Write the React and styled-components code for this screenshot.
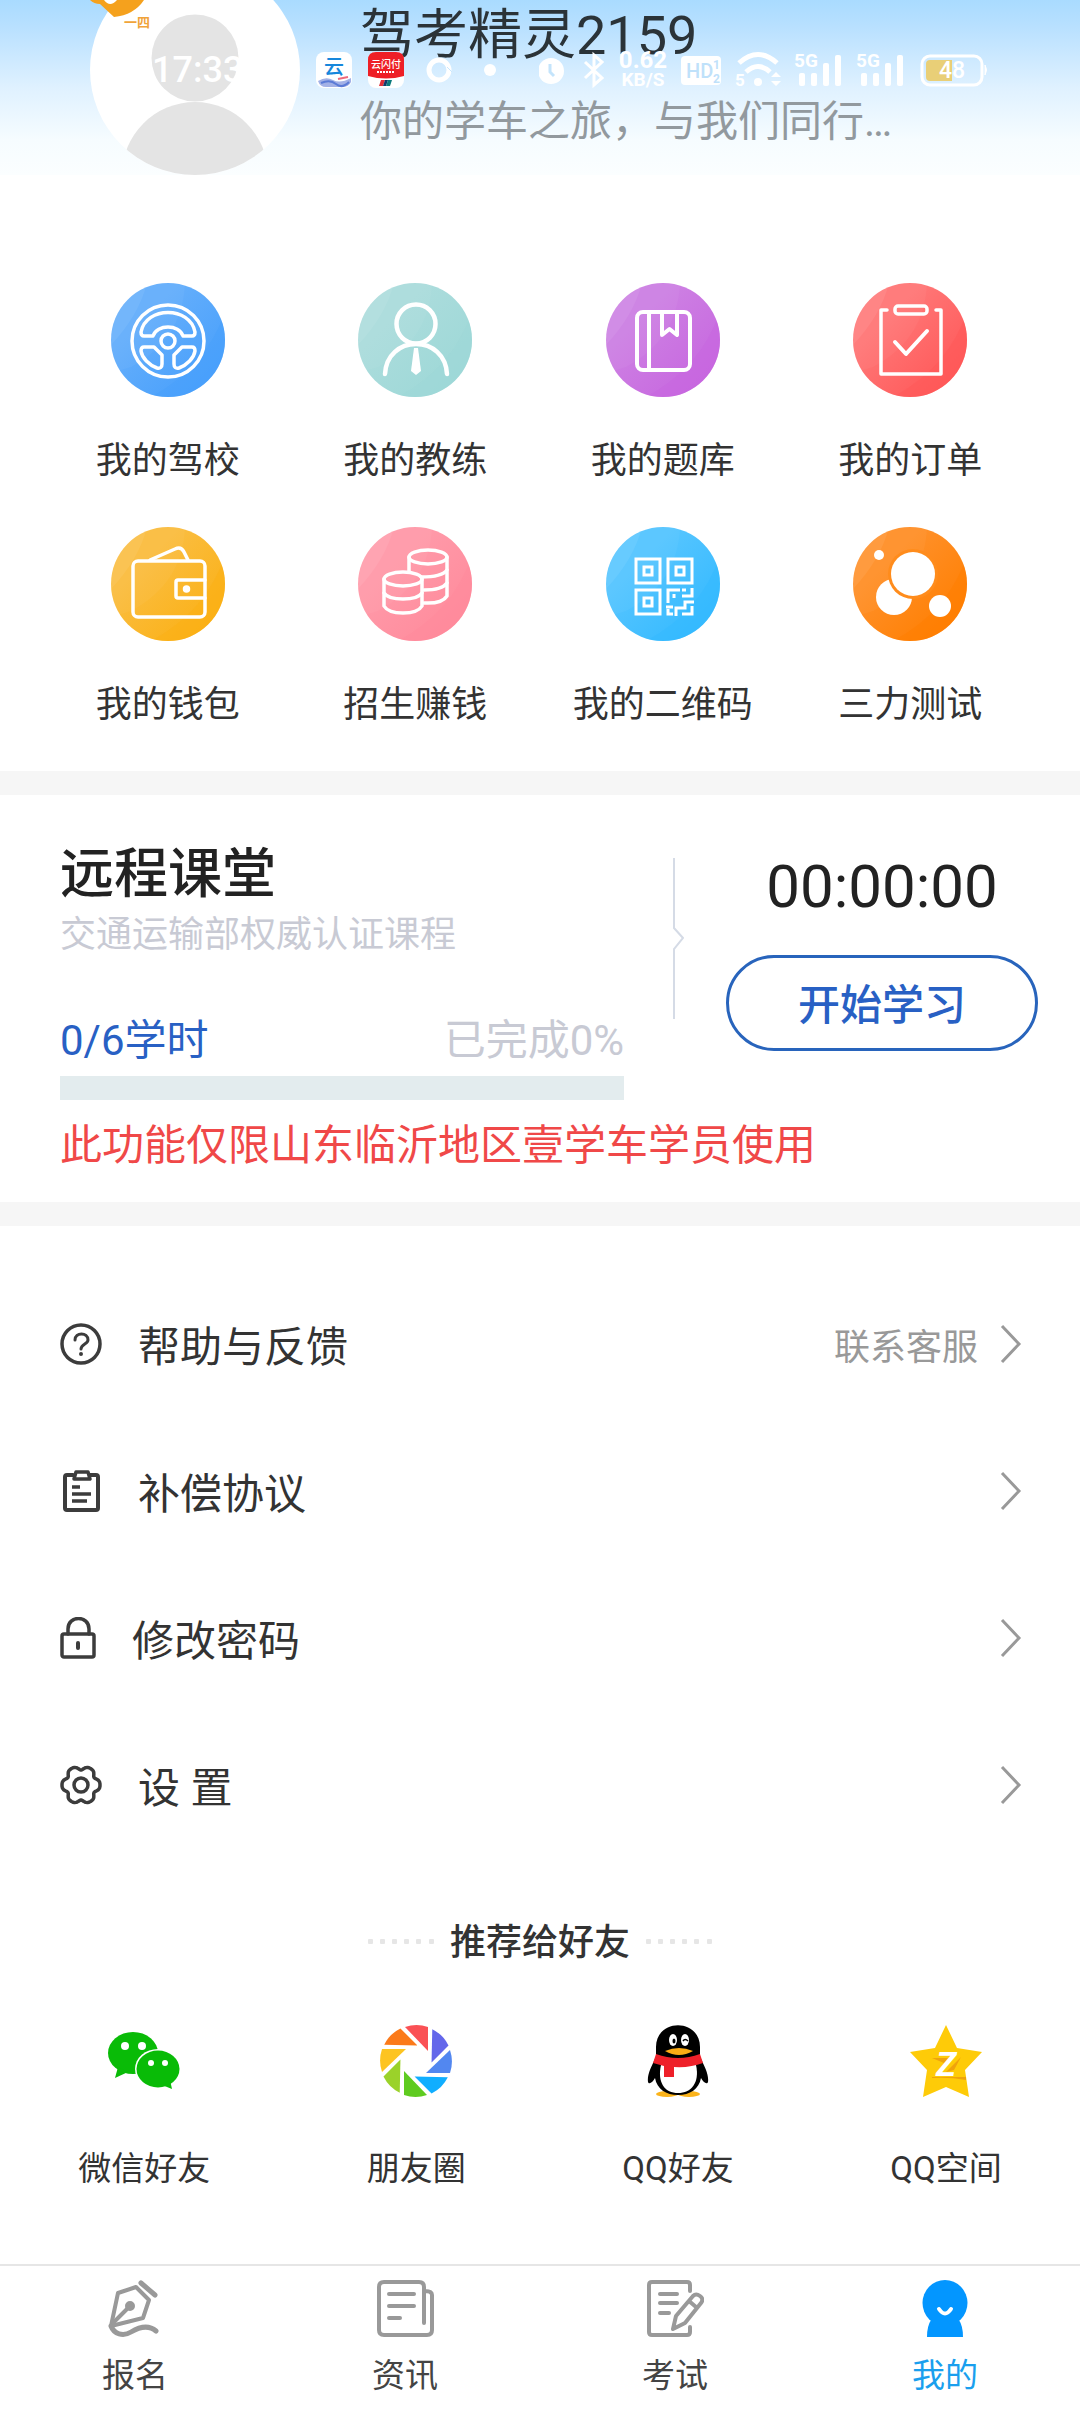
import React from "react";
import styled, { createGlobalStyle } from "styled-components";

const GlobalStyle = createGlobalStyle`
  * {
    box-sizing: border-box;
  }

  body {
    margin: 0;
    background: #fff;
    color: #333;
    font-family: Roboto, "Noto Sans CJK SC", sans-serif;
    font-size: 36px;
  }

  a {
    color: inherit;
    text-decoration: none;
  }

  svg {
    display: block;
    flex: none;
  }

  h1, h2, p {
    margin: 0;
    font-weight: 400;
  }
`;

const Page = styled.div`
  position: relative;
  display: flex;
  flex-direction: column;
  min-height: 100vh;
  overflow: hidden;
`;

const StatusBar = styled.div`
  position: absolute;
  top: 48px;
  left: 0;
  right: 0;
  display: flex;
  align-items: center;
  height: 44px;
  padding: 0 92px 0 152px;
  color: #fff;
`;

const Clock = styled.time`
  width: 164px;
  font-size: 36px;
  font-weight: 500;
  line-height: 44px;
`;

const StatusGroup = styled.div`
  display: flex;
  align-items: center;
  gap: ${props => props.gap}px;
  margin-left: ${props => (props.end ? "auto" : "0")};
`;

const NetSpeed = styled.div`
  width: 52px;
  font-size: ${props => props.size}px;
  font-weight: 700;
  line-height: 20px;
  text-align: center;
`;

const Header = styled.header`
  display: flex;
  gap: 60px;
  height: 175px;
  padding-left: 90px;
  background: linear-gradient(#a9dbff, #b8e0ff 15%, #dff1ff 50%, #f6fcff 80%, #fbfeff);
`;

const Nickname = styled.h1`
  font-size: 54px;
  line-height: 72px;
  color: #2b3338;
`;

const Slogan = styled.p`
  margin-top: 22px;
  font-size: 42px;
  line-height: 56px;
  color: #92999e;
`;

const FeatureGrid = styled.nav`
  display: grid;
  grid-template-columns: repeat(4, 1fr);
  row-gap: 42px;
  padding: 108px 46px 42px 44px;
`;

const IconLink = styled.a`
  display: flex;
  flex-direction: column;
  align-items: center;
  gap: ${props => props.gap}px;
  font-size: ${props => props.size}px;
  line-height: ${props => props.line}px;
  color: ${props => props.color || "#333"};
  white-space: nowrap;
`;

const Band = styled.div`
  height: 24px;
  background: #f6f6f6;
`;

const Classroom = styled.section`
  padding: 48px 42px 28px 60px;
`;

const ClassroomRow = styled.div`
  display: flex;
  gap: 42px;
`;

const Course = styled.div`
  flex: 1;
`;

const CourseTitle = styled.h2`
  font-size: 54px;
  font-weight: 500;
  line-height: 64px;
  color: #222;
`;

const CourseNote = styled.p`
  margin-top: 4px;
  font-size: 36px;
  line-height: 48px;
  color: #c8cad4;
`;

const Hours = styled.div`
  display: flex;
  justify-content: space-between;
  margin: 54px 0 7px;
  font-size: 42px;
  line-height: 56px;
  color: #c8cad4;
`;

const HoursDone = styled.span`
  color: #2860c4;
`;

const Track = styled.div`
  height: 24px;
  background: #e3ecee;
`;

const Fill = styled.div`
  height: 100%;
  background: #2860c4;
`;

const Study = styled.div`
  display: flex;
  flex-direction: column;
  gap: 32px;
  width: 312px;
  padding-top: 8px;
  text-align: center;
`;

const Timer = styled.time`
  font-size: 60px;
  line-height: 72px;
  color: #222;
`;

const StartButton = styled.button`
  height: 96px;
  padding: 0 0 4px;
  border: 3px solid #2864bc;
  border-radius: 48px;
  background: #fff;
  color: #2860c4;
  font: inherit;
  font-size: 42px;
  font-weight: 500;
`;

const Divider = styled.svg`
  margin-top: 15px;
`;

const Warning = styled.p`
  margin-top: 18px;
  font-size: 42px;
  line-height: 56px;
  color: #f04848;
`;

const Menu = styled.nav`
  padding: 44px 58px 0 60px;
`;

const MenuItem = styled.a`
  display: flex;
  align-items: center;
  height: 147px;
  font-size: 42px;
`;

const MenuLabel = styled.span`
  flex: 1;
  margin-left: 36px;
`;

const MenuHint = styled.span`
  margin-right: 22px;
  font-size: 36px;
  color: #999;
`;

const ShareTitle = styled.h2`
  display: flex;
  justify-content: center;
  align-items: center;
  gap: 16px;
  margin-top: 61px;
  font-size: 36px;
  font-weight: 500;
  line-height: 48px;
`;

const ShareRow = styled.div`
  display: flex;
  justify-content: space-around;
  padding: 58px 0 73px;
`;

const TabBar = styled.nav`
  display: grid;
  grid-template-columns: repeat(4, 1fr);
  margin-top: auto;
  padding: 14px 0;
  border-top: 2px solid #e6e6e6;
`;

const CellSignal = () => (
  <svg width="50" height="40" viewBox="0 0 50 40" fill="#fff">
    <text x="1" y="17" fontSize="19" fontWeight="700">5G</text>
    <rect x="6" y="23" width="6" height="13" rx="2" />
    <rect x="18" y="23" width="6" height="13" rx="2" />
    <rect x="30" y="13" width="6" height="23" rx="2" />
    <rect x="42" y="5" width="6" height="31" rx="2" />
  </svg>
);

const Status = () => (
  <StatusBar>
    <Clock>17:33</Clock>
    <StatusGroup gap={16}>
      <svg width="36" height="36" viewBox="0 0 36 36">
        <rect width="36" height="36" rx="8" fill="#fff" />
        <text x="18" y="22" fontSize="20" fontWeight="500" textAnchor="middle" fill="#1687dc">云</text>
        <path d="M2 29 Q10 24 17 28 T35 26 V30 Q33 35 26 35 H10 Q4 35 2 29Z" fill="#a3b1e6" />
        <path d="M5 31 Q14 27 20 32 T33 30" fill="none" stroke="#5b7bd6" strokeWidth="2" />
        <path d="M22 27 L32 25" stroke="#ef6a7c" strokeWidth="2" />
      </svg>
      <svg width="36" height="36" viewBox="0 0 36 36">
        <rect width="36" height="36" rx="8" fill="#fff" />
        <path d="M0 8 Q0 0 8 0 H28 Q36 0 36 8 V24 Q18 29 0 24Z" fill="#ee1f26" />
        <text x="18" y="16" fontSize="10" fontWeight="500" textAnchor="middle" fill="#fff">云闪付</text>
        <path d="M9 20 H27" stroke="#fff" strokeWidth="2" strokeDasharray="2 1" />
        <path d="M13 28 H17 L15 34 H11Z" fill="#e0303a" />
        <path d="M17 28 H20 L18 34 H15Z" fill="#123a6b" />
        <path d="M20 28 H24 L22 34 H18Z" fill="#0b7a7c" />
      </svg>
      <svg width="36" height="36" viewBox="0 0 36 36">
        <circle cx="19" cy="18" r="10" fill="none" stroke="#fff" strokeWidth="5" />
        <path d="M27 15 L32 20" stroke="#c9e7fd" strokeWidth="1" />
      </svg>
      <svg width="36" height="36" viewBox="0 0 36 36">
        <circle cx="18" cy="18" r="6" fill="#fff" />
      </svg>
    </StatusGroup>
    <StatusGroup gap={12} end>
      <svg width="32" height="40" viewBox="0 0 32 40">
        <circle cx="12" cy="21" r="13" fill="#fff" />
        <path d="M11 14 V22 L15 26" fill="none" stroke="#c4e4fb" strokeWidth="3" />
      </svg>
      <svg width="22" height="40" viewBox="0 0 22 40" fill="none" stroke="#fff" strokeWidth="3">
        <path d="M2 12 L19 28 L11 35 V5 L19 12 L2 28" />
      </svg>
      <div>
        <NetSpeed size={24}>0.62</NetSpeed>
        <NetSpeed size={19}>KB/S</NetSpeed>
      </div>
      <svg width="42" height="40" viewBox="0 0 42 40">
        <rect y="6" width="40" height="29" rx="4" fill="#fff" />
        <text x="5" y="28" fontSize="20" fontWeight="500" fill="#bfe1fa">HD</text>
        <text x="32" y="19" fontSize="12" fontWeight="700" fill="#bfe1fa">1</text>
        <text x="32" y="33" fontSize="12" fontWeight="700" fill="#bfe1fa">2</text>
      </svg>
      <svg width="46" height="40" viewBox="0 0 46 40">
        <g fill="none" stroke="#fff" strokeWidth="5">
          <path d="M4 13 Q23 -4 42 13" />
          <path d="M11 22 Q23 11 35 22" />
        </g>
        <circle cx="23" cy="32" r="4" fill="#fff" />
        <text y="36" fontSize="17" fontWeight="700" fill="#fff">5</text>
        <path d="M36 27 L41 22 L46 27Z M36 31 L41 36 L46 31Z" fill="#fff" />
      </svg>
      <CellSignal />
      <CellSignal />
      <svg width="71" height="40" viewBox="0 0 71 40">
        <rect x="5" y="6" width="60" height="29" rx="8" fill="none" stroke="#fff" strokeWidth="3" />
        <path d="M9 14 Q9 10 13 10 H35 V31 H13 Q9 31 9 27Z" fill="#e9cf77" />
        <path d="M68 15 Q71 20 68 25Z" fill="#fff" stroke="#fff" />
        <text x="35" y="28" fontSize="23" fontWeight="500" textAnchor="middle" fill="#fff">48</text>
      </svg>
    </StatusGroup>
  </StatusBar>
);

const Avatar = () => (
  <svg width="210" height="175" viewBox="0 0 210 175">
    <defs>
      <clipPath id="avatar">
        <circle cx="105" cy="70" r="105" />
      </clipPath>
    </defs>
    <circle cx="105" cy="70" r="105" fill="#fff" />
    <g clipPath="url(#avatar)" fill="#e4e4e4">
      <circle cx="105" cy="58" r="43.500" />
      <circle cx="105" cy="175" r="73" />
    </g>
    <path d="M0 0 H54 Q44 15 24 17 L10 4 Q4 4 0 0Z" fill="#f5a11d" />
    <path d="M14 0 Q20 8 27 0Z" fill="#fff" />
    <text x="34" y="27" fontSize="13" fontWeight="700" fill="#f0a33a">一四</text>
  </svg>
);

const Disc = ({ from, to, children }) => {
  const id = `disc-${to.slice(1)}`;
  return (
    <svg width="114" height="114" viewBox="0 0 114 114">
      <defs>
        <linearGradient id={id} x1="0" y1="0" x2="1" y2="1">
          <stop offset="0.3" stopColor={from} />
          <stop offset="0.9" stopColor={to} />
        </linearGradient>
        <clipPath id={`${id}-clip`}>
          <circle cx="57" cy="57" r="57" />
        </clipPath>
      </defs>
      <g clipPath={`url(#${id}-clip)`}>
        <rect width="114" height="114" fill={`url(#${id})`} />
        <path d="M0 0 H36 Q28 32 0 62Z" fill="#fff" opacity="0.07" />
        <path d="M0 0 H74 Q72 56 20 84 L0 90Z" fill="#fff" opacity="0.04" />
        <path d="M114 28 Q96 84 40 114 H114Z" fill={to} opacity="0.5" />
      </g>
      <g fill="none" stroke="#fff" strokeWidth="4" strokeLinecap="round" strokeLinejoin="round">
        {children}
      </g>
    </svg>
  );
};

const features = [
  {
    label: "我的驾校",
    from: "#64aefb",
    to: "#479ffc",
    art: (
      <g strokeWidth="3.500">
        <circle cx="57" cy="58" r="36" />
        <circle cx="57" cy="58" r="7" />
        <path d="M33 53 H42 C46 41 68 41 72 53 H81 Q84 53 84 49 C79 23 35 23 30 49 Q30 53 33 53Z" />
        <path d="M33 64 H43 L51 72 V81 Q51 86 46 85 C38 82 31 75 30 68 Q30 64 33 64Z" />
        <path d="M81 64 H71 L63 72 V81 Q63 86 68 85 C76 82 83 75 84 68 Q84 64 81 64Z" />
      </g>
    )
  },
  {
    label: "我的教练",
    from: "#abdcdc",
    to: "#9dd8d7",
    art: (
      <g strokeWidth="4.500">
        <circle cx="58" cy="41" r="19.500" />
        <path d="M27 91 C28 72 42 61 58 61 S88 72 89 91" />
        <path d="M56 65 H60 L63 88 L58 92 L53 88Z" fill="#fff" stroke="none" />
      </g>
    )
  },
  {
    label: "我的题库",
    from: "#cd80e3",
    to: "#c766df",
    art: (
      <g>
        <rect x="31" y="29" width="53" height="58" rx="6" />
        <path d="M43 30 V86" />
        <path d="M56 30 V52 L63.500 46 L71 52 V30" />
      </g>
    )
  },
  {
    label: "我的订单",
    from: "#ff7777",
    to: "#ff5757",
    art: (
      <g>
        <path d="M34 27 H28 V91 H88 V27 H83" strokeWidth="3.500" />
        <rect x="42" y="23" width="32" height="8" rx="3" strokeWidth="3.500" />
        <path d="M42 59 L53 71 L74 48" />
      </g>
    )
  },
  {
    label: "我的钱包",
    from: "#fabd40",
    to: "#fbb014",
    art: (
      <g strokeWidth="3.500">
        <rect x="22" y="34" width="72" height="56" rx="5" />
        <path d="M39 33 L64 22 Q70 19 73 25 L77 33" />
        <path d="M94 53 H67 Q65 53 65 55 V69 Q65 71 67 71 H94" />
        <circle cx="75.500" cy="62" r="2" fill="#fff" />
      </g>
    )
  },
  {
    label: "招生赚钱",
    from: "#ff9aa9",
    to: "#ff8a9b",
    art: (
      <g strokeWidth="3.500">
        <ellipse cx="70" cy="30" rx="19" ry="7" />
        <path d="M51 30 V44 M89 30 V69 Q84 77 66 76" />
        <path d="M63 50 Q84 50 89 43 M66 63 Q84 63 89 56" />
        <ellipse cx="45" cy="52" rx="19" ry="7" />
        <path d="M26 52 V79 Q30 86 45 86 T64 79 V52" />
        <path d="M26 66 Q30 72 45 72 T64 66" />
      </g>
    )
  },
  {
    label: "我的二维码",
    from: "#56c5ff",
    to: "#33b9ff",
    art: (
      <g strokeWidth="3" strokeLinecap="butt" strokeLinejoin="miter">
        <path d="M30 32 H54 V56 H30Z M62 32 H86 V56 H62Z M30 63 H54 V87 H30Z" />
        <path d="M38 40 H46 V48 H38Z M70 40 H78 V48 H70Z M38 71 H46 V79 H38Z" />
        <path d="M62 76 V63 H74 M68 67 V71 M86 61 V69 H76 M80 63 H76 M88 75 H79 V81 H70 V89 M60 80 H67 M62 82 V87 H67 M76 87 H86 V79" />
      </g>
    )
  },
  {
    label: "三力测试",
    from: "#ff9029",
    to: "#ff7e00",
    art: (
      <g fill="#fff" stroke="none">
        <circle cx="41" cy="70" r="18" />
        <circle cx="60" cy="47" r="25" fill="#ff8c1c" />
        <circle cx="60" cy="47" r="22" />
        <circle cx="87" cy="79" r="11" />
        <circle cx="26" cy="28" r="5" />
      </g>
    )
  }
];

// six broad lobes with narrow notches between them
const gearPoints = Array.from({ length: 72 }, (_, i) => {
  const angle = (i * Math.PI) / 36;
  const radius = 19 - 4 * Math.sin(3 * angle) ** 4;
  return `${21 + radius * Math.cos(angle)},${21 + radius * Math.sin(angle)}`;
}).join(" ");

const MenuIcon = ({ width = 42, children }) => (
  <svg
    width={width}
    height="42"
    viewBox={`0 0 ${width} 42`}
    fill="none"
    stroke="#3c3c3c"
    strokeWidth="3.500"
    strokeLinecap="round"
    strokeLinejoin="round"
  >
    {children}
  </svg>
);

const menu = [
  {
    label: "帮助与反馈",
    hint: "联系客服",
    icon: (
      <MenuIcon>
        <circle cx="21" cy="21" r="19" />
        <path d="M15 17 C15 9 28 9 28 17 C28 21 21 21 21 26" strokeWidth="3" />
        <circle cx="21" cy="31" r="1" strokeWidth="2" />
      </MenuIcon>
    )
  },
  {
    label: "补偿协议",
    icon: (
      <MenuIcon>
        <path d="M13 5 H7 Q5 5 5 7 V38 Q5 40 7 40 H36 Q38 40 38 38 V7 Q38 5 36 5 H30" strokeWidth="4" />
        <path d="M16 2 H28 L30 9 H14Z" />
        <path d="M12 17 H20 M12 24 H31 M12 31 H27" strokeLinecap="butt" />
      </MenuIcon>
    )
  },
  {
    label: "修改密码",
    icon: (
      <MenuIcon width={36}>
        <rect x="2" y="17" width="32" height="23" rx="2" />
        <path d="M8 17 V12 C8 -2 29 -2 29 12 V17" />
        <path d="M18 26 V31" strokeWidth="4" />
      </MenuIcon>
    )
  },
  {
    label: "设 置",
    icon: (
      <MenuIcon>
        <polygon points={gearPoints} />
        <circle cx="21" cy="21" r="7" />
      </MenuIcon>
    )
  }
];

const Chevron = () => (
  <svg width="22" height="40" viewBox="0 0 22 40" fill="none" stroke="#999" strokeWidth="3">
    <path d="M2 2 L19 20 L2 38" />
  </svg>
);

const Dots = () => (
  <svg width="66" height="9" viewBox="0 0 66 9" fill="#e6e6e6">
    {[0, 12, 24, 36, 48, 61].map(x => (
      <rect key={x} x={x} width="5" height="5" rx="1" />
    ))}
  </svg>
);

const blades = ["#fa5155", "#6467ea", "#5287f0", "#10aeff", "#5fcb20", "#9bd22a", "#fdc421", "#fb7a1a"];

const shares = [
  {
    label: "微信好友",
    art: (
      <g fill="#09bb07">
        <ellipse cx="25" cy="28" rx="25" ry="21" />
        <path d="M10 42 L7 53 L20 47Z" />
        <ellipse cx="50" cy="44" rx="23" ry="20" fill="#fff" />
        <ellipse cx="50" cy="44" rx="21.500" ry="18.500" />
        <path d="M54 60 L64 64 L62 55Z" />
        <g fill="#fff">
          <circle cx="17" cy="21" r="4" />
          <circle cx="34" cy="21" r="4" />
          <circle cx="43" cy="38" r="3" />
          <circle cx="57" cy="38" r="3" />
        </g>
      </g>
    )
  },
  {
    label: "朋友圈",
    art: blades.map((color, i) => (
      <path
        key={color}
        d="M25 2 A36 36 0 0 1 48 2 V26Z"
        fill={color}
        transform={`rotate(${i * 45} 36 36)`}
      />
    ))
  },
  {
    label: "QQ好友",
    art: (
      <g>
        <ellipse cx="25" cy="69" rx="11" ry="3" fill="#fbb31a" />
        <ellipse cx="47" cy="69" rx="11" ry="3" fill="#fbb31a" />
        <path d="M14 32 V22 C14 -7 58 -7 58 22 V32 C63 42 67 50 66 57 C65 60 61 57 59 53 C57 64 48 70 36 70 S15 64 13 53 C11 57 7 60 6 57 C5 50 9 42 14 32Z" fill="#000" />
        <path d="M19 40 H54 C58 58 49 68 36 68 S15 58 19 40Z" fill="#fff" />
        <ellipse cx="31" cy="15" rx="4" ry="6" fill="#fff" />
        <ellipse cx="43" cy="15" rx="4" ry="6" fill="#fff" />
        <ellipse cx="32" cy="16" rx="1.500" ry="2.500" fill="#000" />
        <path d="M41 16 Q43 13 46 16" fill="none" stroke="#000" strokeWidth="1.500" />
        <path d="M23 26 Q37 20 51 26 Q37 34 23 26Z" fill="#fbab14" />
        <path d="M14 29 Q36 37 58 29 L61 38 Q48 43 32 42 V52 H22 V41 L11 38Z" fill="#ee2029" />
      </g>
    )
  },
  {
    label: "QQ空间",
    art: (
      <g>
        <path d="M36 0 L47 23 L72 27 L55 45 L59 72 L36 62 L13 72 L17 45 L0 27 L25 23Z" fill="#fecb08" />
        <path d="M22 33 H38 L34 38Z M36 47 L51 32 L44 45Z M22 52 H56 V55 Q40 52 22 53Z" fill="#efa30c" />
        <text x="36" y="51" fontSize="34" fontWeight="700" fontStyle="italic" textAnchor="middle" fill="#fff">
          Z
        </text>
      </g>
    )
  }
];

const tabs = [
  {
    label: "报名",
    art: (
      <g>
        <path d="M11 13 L29 7 L42 20 L36 38 L4 46Z" />
        <path d="M5 44 L22 27" />
        <circle cx="23" cy="26" r="3" fill="#999" />
        <path d="M34 3 L48 15" strokeWidth="5" />
        <path d="M4 46 C7 54 16 57 24 52 C34 46 42 45 49 51" strokeWidth="5" />
      </g>
    )
  },
  {
    label: "资讯",
    art: (
      <g>
        <path d="M47 43 V7 Q47 2 42 2 H7 Q2 2 2 7 V50 Q2 55 7 55 H50 Q55 55 55 50 V15 Q55 11 48 11" />
        <path d="M12 14 H37 M12 26 H37 M12 38 H23" />
      </g>
    )
  },
  {
    label: "考试",
    art: (
      <g>
        <path d="M43 11 V5 Q43 2 40 2 H5 Q2 2 2 5 V52 Q2 55 5 55 H40 Q43 55 43 52 V47" />
        <path d="M13 14 H30 M13 23 H30 M13 33 H22" />
        <path d="M29 36 L46 16 Q49 13 53 16 T54 23 L38 43 L26 49Z M42 21 L49 27" />
      </g>
    )
  },
  {
    label: "我的",
    active: true,
    art: (
      <g fill="#0396ff" stroke="none">
        <ellipse cx="28" cy="23" rx="22.500" ry="23" />
        <path d="M14 40 H42 Q46 46 46 57 H10 Q10 46 14 40Z" />
        <path d="M22 29 Q28 38 34 29" fill="none" stroke="#fff" strokeWidth="4" />
      </g>
    )
  }
];

const App = () => (
  <Page>
    <GlobalStyle />
    <Header>
      <Avatar />
      <div>
        <Nickname>驾考精灵2159</Nickname>
        <Slogan>你的学车之旅，与我们同行…</Slogan>
      </div>
    </Header>
    <Status />

    <FeatureGrid>
      {features.map(item => (
        <IconLink key={item.label} href="#" gap={40} size={36} line={48}>
          <Disc from={item.from} to={item.to}>
            {item.art}
          </Disc>
          {item.label}
        </IconLink>
      ))}
    </FeatureGrid>

    <Band />
    <Classroom>
      <ClassroomRow>
        <Course>
          <CourseTitle>远程课堂</CourseTitle>
          <CourseNote>交通运输部权威认证课程</CourseNote>
          <Hours>
            <HoursDone>0/6学时</HoursDone>
            <span>已完成0%</span>
          </Hours>
          <Track role="progressbar" aria-label="已完成" aria-valuenow={0}>
            <Fill style={{ width: "0%" }} />
          </Track>
        </Course>
        <Divider width="18" height="161" viewBox="0 0 18 161" fill="none" stroke="#d5dbe6" strokeWidth="2">
          <path d="M8 0 V70 L17 80 L8 91 V161" />
        </Divider>
        <Study>
          <Timer>00:00:00</Timer>
          <StartButton type="button">开始学习</StartButton>
        </Study>
      </ClassroomRow>
      <Warning>此功能仅限山东临沂地区壹学车学员使用</Warning>
    </Classroom>
    <Band />

    <Menu>
      {menu.map(item => (
        <MenuItem key={item.label} href="#">
          {item.icon}
          <MenuLabel>{item.label}</MenuLabel>
          {item.hint && <MenuHint>{item.hint}</MenuHint>}
          <Chevron />
        </MenuItem>
      ))}
    </Menu>

    <ShareTitle>
      <Dots />
      推荐给好友
      <Dots />
    </ShareTitle>
    <ShareRow>
      {shares.map(item => (
        <IconLink key={item.label} href="#" gap={50} size={33} line={44}>
          <svg width="72" height="72" viewBox="0 0 72 72">
            {item.art}
          </svg>
          {item.label}
        </IconLink>
      ))}
    </ShareRow>

    <TabBar>
      {tabs.map(item => (
        <IconLink
          key={item.label}
          href="#"
          gap={17}
          size={33}
          line={44}
          color={item.active ? "#1a9fee" : "#444"}
        >
          <svg
            width="57"
            height="57"
            viewBox="0 0 57 57"
            fill="none"
            stroke="#999"
            strokeWidth="4"
            strokeLinecap="round"
            strokeLinejoin="round"
          >
            {item.art}
          </svg>
          {item.label}
        </IconLink>
      ))}
    </TabBar>
  </Page>
);

export default App;
